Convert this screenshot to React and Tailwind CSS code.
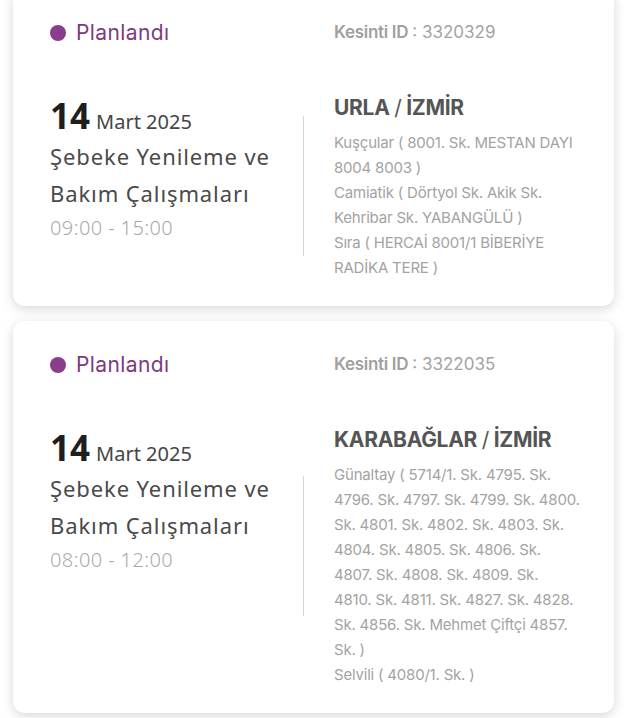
const outages = [
  {
    id: "3320329",
    time: "09:00 - 15:00",
    city: "URLA",
    divider: "mt-[-2px]",
    lines: [
      "Kuşçular ( 8001. Sk. MESTAN DAYI",
      "8004 8003 )",
      "Camiatik ( Dörtyol Sk. Akik Sk.",
      "Kehribar Sk. YABANGÜLÜ )",
      "Sıra ( HERCAİ 8001/1 BİBERİYE",
      "RADİKA TERE )",
    ],
  },
  {
    id: "3322035",
    time: "08:00 - 12:00",
    city: "KARABAĞLAR",
    divider: "mb-[22px]",
    lines: [
      "Günaltay ( 5714/1. Sk. 4795. Sk.",
      "4796. Sk. 4797. Sk. 4799. Sk. 4800.",
      "Sk. 4801. Sk. 4802. Sk. 4803. Sk.",
      "4804. Sk. 4805. Sk. 4806. Sk.",
      "4807. Sk. 4808. Sk. 4809. Sk.",
      "4810. Sk. 4811. Sk. 4827. Sk. 4828.",
      "Sk. 4856. Sk. Mehmet Çiftçi 4857.",
      "Sk. )",
      "Selvili ( 4080/1. Sk. )",
    ],
  },
];

const OutageCard = ({ item }) => {
  return (
    <div className="bg-white rounded-[12px] shadow-[0_3px_12px_rgb(0_0_0/0.16)] pt-[32px] pb-[26px] pl-[37px] pr-[30px]">
      <div className="flex">
        <div className="w-[253px] flex items-center gap-[10px] h-[24px]">
          <span className="w-[16px] h-[16px] rounded-full bg-[#8a3d8d]"></span>
          <span className="font-['Inter',sans-serif] text-[21px] tracking-[0.4px] text-[#7b3b7e]">Planlandı</span>
        </div>
        <div className="ml-[31px] h-[24px] flex items-center font-['Inter',sans-serif] text-[17px] text-[#a3a3a3]">
          <span className="font-semibold text-[#a0a0a0] tracking-[-0.3px]">Kesinti ID</span>
          <span className="ml-[4px]">: {item.id}</span>
        </div>
      </div>

      <div className="flex mt-[49px]">
        <div className="w-[253px] font-['Noto_Sans',sans-serif]">
          <div className="flex items-baseline h-[44px]">
            <span className="text-[35px] font-bold text-[#1e1e1e] leading-[44px]">14</span>
            <span className="ml-[6px] text-[20px] text-[#454545]">Mart 2025</span>
          </div>
          <div className="text-[22px] leading-[37px] tracking-[0.9px] text-[#4a4a4a]">
            Şebeke Yenileme ve
            <br />
            Bakım Çalışmaları
          </div>
          <div className="text-[20px] leading-[28px] font-light tracking-[0.4px] text-[#aaaaaa] mt-[2px]">{item.time}</div>
        </div>

        <div className={`w-px h-[140px] bg-[#d4d4d4] self-center ${item.divider}`}></div>

        <div className="ml-[30px] flex-1 font-['Inter',sans-serif]">
          <div className="text-[21px] leading-[28px] font-bold text-[#555555] tracking-[-0.3px]">
            {item.city} <span className="font-normal">/</span> İZMİR
          </div>
          <div className="mt-[8px] text-[15px] leading-[25px] text-[#a3a3a3] tracking-[-0.2px]">
            {item.lines.map((s) => (
              <div key={s} className="whitespace-nowrap">{s}</div>
            ))}
          </div>
        </div>
      </div>
    </div>
  );
};

const App = () => {
  return (
    <div className="min-h-screen bg-white overflow-hidden">
      <div className="-mt-[11px] pl-[13px] pr-[15px] flex flex-col gap-[15px] pb-[20px]">
        {outages.map((o) => (
          <OutageCard key={o.id} item={o} />
        ))}
      </div>
    </div>
  );
};

export default App;
